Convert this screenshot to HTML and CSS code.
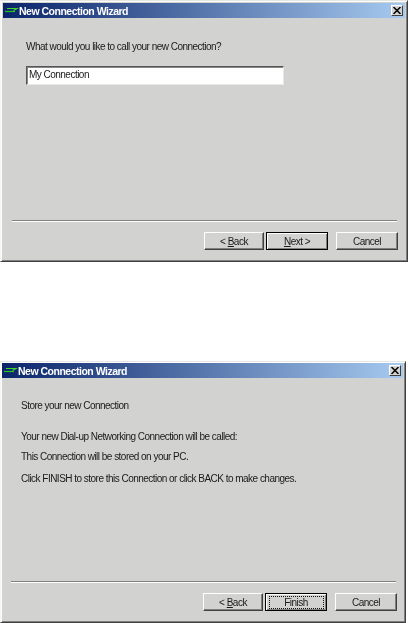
FILE: index.html
```html
<!DOCTYPE html>
<html lang="en">
<head>
<meta charset="utf-8">
<title>New Connection Wizard</title>
<link rel="stylesheet" href="styles.css">
</head>
<body>
<section class="window window-name">
  <header class="titlebar">
    <svg class="logo" width="14" height="8" viewBox="0 0 14 8"><path d="M2 1.5H12L8.5 3.5" fill="none" stroke="#3fd62a" stroke-width="1.2"/><path d="M0 4.5H10" fill="none" stroke="#2fc01e" stroke-width="1.2"/></svg>
    <span class="title">New Connection Wizard</span>
    <span class="close"><svg width="8" height="7" viewBox="0 0 8 7"><path d="M0.5 0L7.5 7M7.5 0L0.5 7" stroke="#000" stroke-width="1.5" fill="none"/></svg></span>
  </header>
  <div class="content">
    <p class="line">What would you like to call your new Connection?</p>
    <div class="field">My Connection</div>
  </div>
  <div class="separator"></div>
  <footer class="buttons">
    <button class="btn"><span>&lt; <u>B</u>ack</span></button>
    <button class="btn btn-default"><span><u>N</u>ext &gt;</span></button>
    <button class="btn btn-cancel"><span>Cancel</span></button>
  </footer>
</section>

<section class="window window-store">
  <header class="titlebar">
    <svg class="logo" width="14" height="8" viewBox="0 0 14 8"><path d="M2 1.5H12L8.5 3.5" fill="none" stroke="#3fd62a" stroke-width="1.2"/><path d="M0 4.5H10" fill="none" stroke="#2fc01e" stroke-width="1.2"/></svg>
    <span class="title">New Connection Wizard</span>
    <span class="close"><svg width="8" height="7" viewBox="0 0 8 7"><path d="M0.5 0L7.5 7M7.5 0L0.5 7" stroke="#000" stroke-width="1.5" fill="none"/></svg></span>
  </header>
  <div class="content">
    <p class="line">Store your new Connection</p>
    <p class="line line-gap-lg">Your new Dial-up Networking Connection will be called:</p>
    <p class="line line-gap-sm">This Connection will be stored on your PC.</p>
    <p class="line line-gap">Click FINISH to store this Connection or click BACK to make changes.</p>
  </div>
  <div class="separator"></div>
  <footer class="buttons">
    <button class="btn"><span>&lt; <u>B</u>ack</span></button>
    <button class="btn btn-default"><span class="focus">Finish</span></button>
    <button class="btn btn-cancel"><span>Cancel</span></button>
  </footer>
</section>
</body>
</html>
```
FILE: styles.css
```css
html, body {
  margin: 0;
  padding: 0;
  background: #fff;
}
body {
  width: 408px;
  height: 623px;
  overflow: hidden;
  font-family: "Liberation Sans", Arial, sans-serif;
  font-size: 10px;
  letter-spacing: -0.52px;
  color: #1a1a1a;
}
.window {
  box-sizing: border-box;
  display: flex;
  flex-direction: column;
  background: #d2d2d0;
  border: 1px solid;
  border-color: #e6e6e4 #404040 #404040 #f4f4f2;
  box-shadow: inset 1px 1px 0 #fff, inset -1px -1px 0 #808080;
  padding: 2px;
  filter: blur(0.3px);
}
.window-name {
  width: 408px;
  height: 262px;
}
.window-store {
  width: 406px;
  height: 262px;
  margin-top: 99px;
  padding: 1px 2px 2px 1px;
}
.titlebar {
  flex: none;
  display: flex;
  align-items: center;
  height: 15px;
  padding: 0 2px;
  background: linear-gradient(90deg, #0a246a 0%, #a6caf0 100%);
}
.logo {
  flex: none;
  margin-right: 0;
}
.title {
  flex: 1;
  color: #fff;
  font-weight: 700;
  font-size: 10.5px;
  letter-spacing: -0.5px;
  white-space: nowrap;
}
.close {
  flex: none;
  box-sizing: border-box;
  width: 12px;
  height: 11px;
  display: flex;
  align-items: center;
  justify-content: center;
  background: #d2d2d0;
  border: 1px solid;
  border-color: #fff #404040 #404040 #fff;
}
.content {
  flex: 1;
  min-height: 0;
}
.line {
  margin: 0;
  line-height: 12px;
  white-space: nowrap;
}
.window-name .content {
  padding: 23px 0 0 23px;
}
.window-store .content {
  padding: 22px 0 0 19px;
}
.line-gap-lg {
  margin-top: 19px;
}
.line-gap-sm {
  margin-top: 8px;
}
.line-gap {
  margin-top: 10px;
}
.field {
  box-sizing: border-box;
  width: 258px;
  height: 19px;
  margin-top: 13px;
  padding: 0 2px;
  line-height: 15px;
  background: #fff;
  border: 1px solid;
  border-color: #555 #e8e8e8 #e8e8e8 #555;
  box-shadow: inset 1px 1px 0 #888;
}
.separator {
  flex: none;
  height: 1px;
  margin: 0 8px 0 9px;
  background: #808080;
  border-bottom: 1px solid #fff;
}
.buttons {
  flex: none;
  display: flex;
  justify-content: flex-end;
  padding: 10px 7px 9px 0;
}
.window-store .separator {
  margin-right: 7px;
}
.window-store .buttons {
  padding-right: 6px;
}
.btn {
  box-sizing: border-box;
  width: 60px;
  height: 18px;
  padding: 0;
  display: flex;
  align-items: center;
  justify-content: center;
  font: inherit;
  letter-spacing: inherit;
  color: #1a1a1a;
  background: #d2d2d0;
  border: 1px solid;
  border-color: #fff #404040 #404040 #fff;
  box-shadow: inset -1px -1px 0 #808080;
}
.btn-default {
  width: 62px;
  margin-left: 2px;
  border: 1px solid #000;
  box-shadow: inset 1px 1px 0 #fff, inset -1px -1px 0 #808080;
}
.btn-cancel {
  width: 62px;
  margin-left: 8px;
}
.focus {
  box-sizing: border-box;
  width: 55px;
  height: 13px;
  line-height: 11px;
  text-align: center;
  border: 1px dotted #111;
}
```
